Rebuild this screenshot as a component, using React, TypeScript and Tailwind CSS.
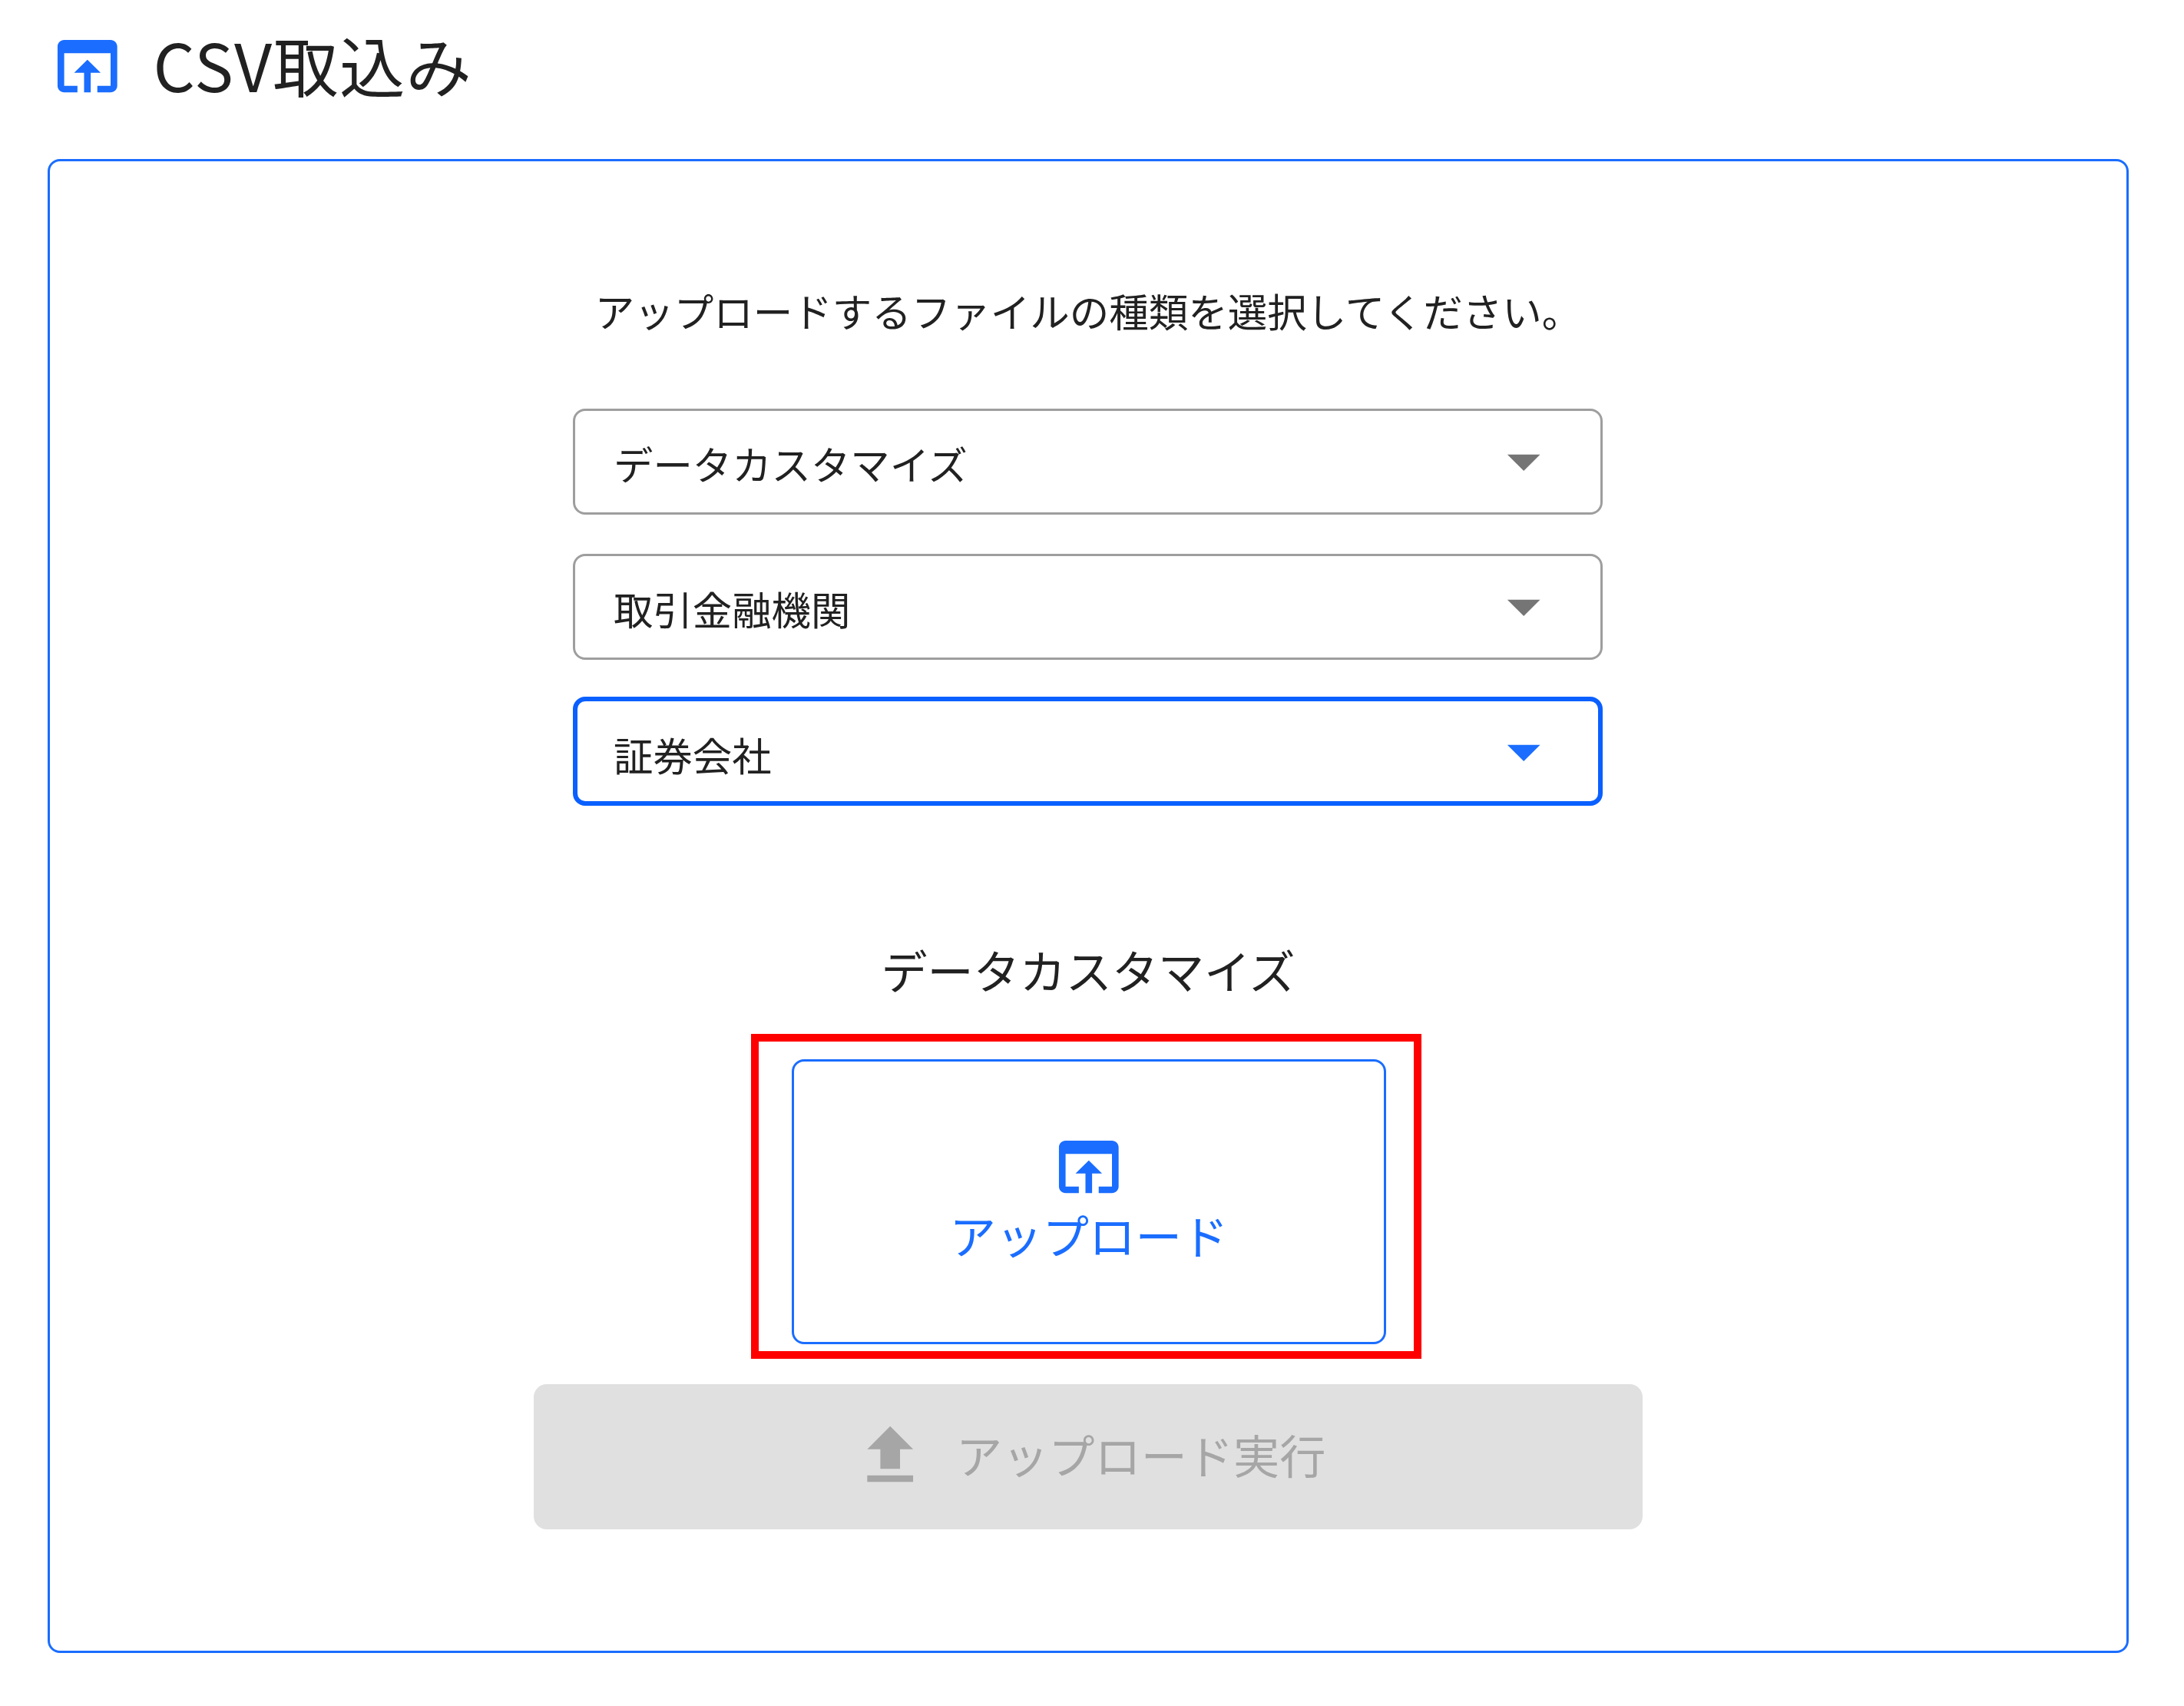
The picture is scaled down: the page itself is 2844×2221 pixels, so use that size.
import clsx from 'clsx'

const selects = [
  { label: 'データカスタマイズ', active: false },
  { label: '取引金融機関', active: false },
  { label: '証券会社', active: true },
]

function OpenInBrowserIcon() {
  return (
    <svg viewBox="0 0 24 24" fill="currentColor" className="h-[102.4px] w-[103.6px] shrink-0" preserveAspectRatio="none">
      <path d="M19 4H5c-1.11 0-2 .9-2 2v12c0 1.1.89 2 2 2h4v-2H5V8h14v10h-4v2h4c1.1 0 2-.9 2-2V6c0-1.1-.89-2-2-2zm-7 6l-4 4h3v6h2v-6h3l-4-4z" />
    </svg>
  )
}

function SelectBox({ label, active }: { label: string; active: boolean }) {
  return (
    <button
      className={clsx(
        'flex w-[1341px] items-center justify-between rounded-[16px]',
        active
          ? 'mt-[-3px] h-[142px] border-[6.4px] border-[#0a60ff] pl-[47px] pr-[46px]'
          : 'h-[138px] border-[3px] border-[#9e9e9e] pl-[50px] pr-[49px]'
      )}
    >
      <span className={clsx('text-[51.4px] leading-[76px]', active ? 'pt-[7px]' : 'pt-[4px]')}>{label}</span>
      <svg
        viewBox="0 0 24 24"
        fill="currentColor"
        className={clsx('size-[102.4px] shrink-0', active ? 'text-[#1a6dff]' : 'mb-[2px] text-[#757575]')}
      >
        <path d="M7 10l5 5 5-5z" />
      </svg>
    </button>
  )
}

export default function App() {
  return (
    <div className="h-[2221px] w-[2844px] bg-white pl-[62px] pt-[35px] font-['Noto_Sans_CJK_JP',sans-serif] text-[#212121]">
      <header className="flex h-[102px] items-center gap-[34px]">
        <span className="text-[#1a6dff]">
          <OpenInBrowserIcon />
        </span>
        <h1 className="pb-[6px] text-[85.4px] leading-[102px] tracking-[1.2px]">CSV取込み</h1>
      </header>

      <main className="mt-[70px] flex h-[1945px] w-[2710px] flex-col items-center rounded-[16px] border-[3px] border-[#1a6dff]">
        <p className="mt-[156px] text-[51.5px] leading-[76px]">
          アップロードするファイルの種類を選択してください。
        </p>

        <div className="mr-[1px] mt-[90px] flex flex-col gap-[51px]">
          {selects.map((s) => (
            <SelectBox key={s.label} label={s.label} active={s.active} />
          ))}
        </div>

        <h2 className="mt-[168px] text-[60.1px] leading-[90px]">データカスタマイズ</h2>

        {/* highlighted upload area */}
        <div className="mr-[5px] mt-[39px] flex h-[423px] w-[873px] shrink-0 border-[10px] border-[#ff0000] pl-[43px] pt-[23px]">
          <button className="flex h-[371px] w-[774px] flex-col items-center rounded-[16px] border-[3px] border-[#1a6dff] pt-[86px] text-[#1a6dff]">
            <span className="mr-[1px]">
              <OpenInBrowserIcon />
            </span>
            <span className="mt-[-8px] text-[60.5px] leading-[90px]">アップロード</span>
          </button>
        </div>

        <button
          disabled
          className="mt-[33px] flex h-[189px] w-[1444px] shrink-0 items-center justify-center gap-[35px] rounded-[17px] bg-[#e0e0e0] text-[#a6a6a6]"
        >
          <svg viewBox="0 0 24 24" fill="currentColor" className="mb-[2px] size-[102.4px] shrink-0">
            <path d="M5 20h14v-2H5v2zM5 10h4v6h6v-6h4l-7-7-7 7z" />
          </svg>
          <span className="pb-[8px] text-[60.2px] leading-[90px]">アップロード実行</span>
        </button>
      </main>
    </div>
  )
}
